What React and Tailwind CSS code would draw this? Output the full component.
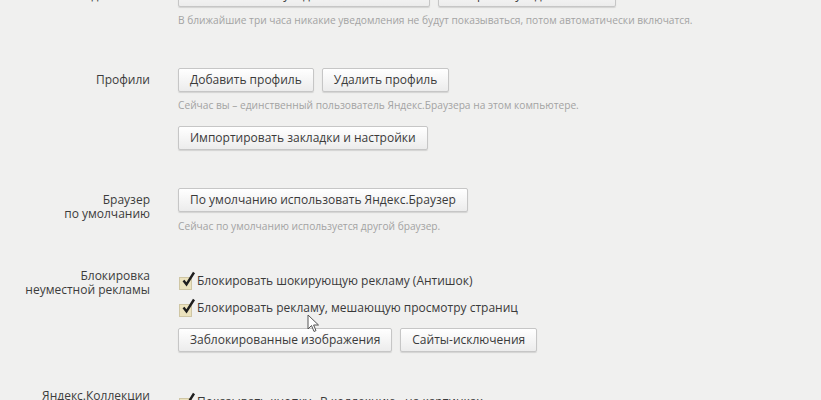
import React from "react"

const font = { fontFamily: '"Open Sans", "DejaVu Sans", sans-serif' }

function Button({ children }) {
  return (
    <button className="h-[24px] px-[11px] border border-[#c6c6c6] rounded-[2px] bg-gradient-to-b from-white to-[#ececec] shadow-[0_1px_1px_rgba(0,0,0,0.12)] text-[12px] leading-[22px] text-[#3a3a3a] whitespace-nowrap">
      {children}
    </button>
  )
}

function Hint({ children, className = "" }) {
  return (
    <div className={"text-[10.2px] leading-[13px] text-[#a3a3a3] whitespace-nowrap " + className}>
      {children}
    </div>
  )
}

function Check({ children, className = "" }) {
  return (
    <div className={"flex flex-row items-center h-[18px] " + className}>
      <div className="relative w-[13px] h-[13px] mt-[4px] ml-[1px] bg-[#ebe2bd] border border-[#cfc6a4]">
        <svg
          className="absolute left-[1px] top-[-7px]"
          width="15"
          height="16"
          viewBox="0 0 15 16"
        >
          <path
            d="M2.5 9.5 L5.5 13.5 L13 1.5"
            fill="none"
            stroke="#1e1e1e"
            strokeWidth="2.4"
            strokeLinejoin="miter"
          />
        </svg>
      </div>
      <span className="ml-[5px] text-[12px] text-[#3a3a3a] whitespace-nowrap">{children}</span>
    </div>
  )
}

function Section({ label, children, className = "", labelClass = "pt-[5px]" }) {
  return (
    <div className={"grid grid-cols-[150px_1fr] gap-x-[28px] " + className}>
      <div className={"text-right text-[12px] leading-[14px] text-[#3c3c3c] " + labelClass}>
        {label}
      </div>
      <div className="flex flex-col items-start">{children}</div>
    </div>
  )
}

export default function App() {
  return (
    <div className="relative w-[821px] h-[400px] overflow-hidden bg-[#f0f0ef]" style={font}>
      <div className="flex flex-col -mt-[17px]">
        <Section label="Уведомления">
          <div className="flex flex-row gap-[8px]">
            <Button>Выключить все уведомления на 3 часа</Button>
            <Button>Настройка уведомлений...</Button>
          </div>
          <Hint className="mt-[7px]">
            В ближайшие три часа никакие уведомления не будут показываться, потом автоматически включатся.
          </Hint>
        </Section>

        <Section label="Профили" className="mt-[41px]">
          <div className="flex flex-row gap-[8px]">
            <Button>Добавить профиль</Button>
            <Button>Удалить профиль</Button>
          </div>
          <Hint className="mt-[7px]">
            Сейчас вы – единственный пользователь Яндекс.Браузера на этом компьютере.
          </Hint>
          <div className="mt-[12px]">
            <Button>Импортировать закладки и настройки</Button>
          </div>
        </Section>

        <Section
          label={
            <>
              Браузер
              <br />
              по умолчанию
            </>
          }
          className="mt-[38px]"
        >
          <Button>По умолчанию использовать Яндекс.Браузер</Button>
          <Hint className="mt-[8px]">Сейчас по умолчанию используется другой браузер.</Hint>
        </Section>

        <Section
          label={
            <>
              Блокировка
              <br />
              неуместной рекламы
            </>
          }
          className="mt-[36px]"
          labelClass="pt-0"
        >
          <Check className="mt-[3px]">Блокировать шокирующую рекламу (Антишок)</Check>
          <Check className="mt-[9px]">Блокировать рекламу, мешающую просмотру страниц</Check>
          <div className="flex flex-row gap-[8px] mt-[11px]">
            <Button>Заблокированные изображения</Button>
            <Button>Сайты-исключения</Button>
          </div>
        </Section>

        <Section label="Яндекс.Коллекции" className="mt-[37px]" labelClass="pt-0">
          <Check className="mt-[4px]">Показывать кнопку «В коллекцию» на картинках</Check>
        </Section>
      </div>

      <svg
        className="absolute left-[307px] top-[314px]"
        width="13"
        height="19"
        viewBox="0 0 13 19"
      >
        <path
          d="M1 1 L1 15 L4.5 11.5 L7 17.5 L9 16.6 L6.6 11 L11.5 11 Z"
          fill="#ffffff"
          stroke="#555"
          strokeWidth="1"
          strokeLinejoin="round"
        />
      </svg>
    </div>
  )
}
